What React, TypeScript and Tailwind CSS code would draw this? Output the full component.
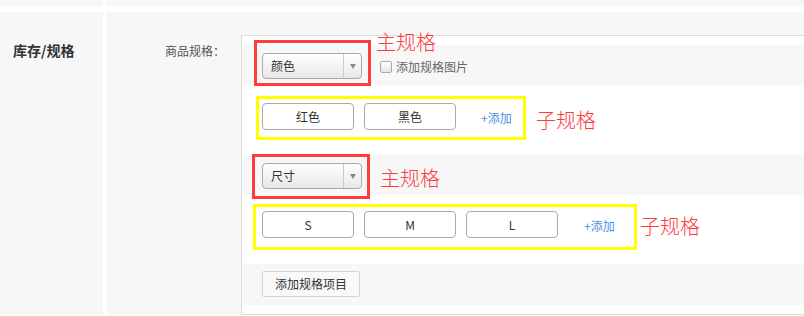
import React from 'react';

const font = { fontFamily: '"Noto Sans CJK SC", "Noto Sans", sans-serif' };

const SpecSelect: React.FC<{ value: string }> = ({ value }) => (
  <div className="flex h-[26px] w-[100px] items-center rounded-[4px] border border-[#aaa] bg-gradient-to-b from-white to-[#e8e8e8] text-[12px] text-[#333]">
    <span className="flex-1 pl-2">{value}</span>
    <span className="flex h-full w-[18px] items-center justify-center border-l border-[#ccc]">
      <span className="block h-0 w-0 border-x-[3.5px] border-t-[5px] border-x-transparent border-t-[#888]" />
    </span>
  </div>
);

const SubItem: React.FC<{ label: string }> = ({ label }) => (
  <div className="flex h-[27px] w-[92px] items-center justify-center rounded-[4px] border border-[#aaa] bg-white text-[12px] text-[#333]">
    {label}
  </div>
);

const Note: React.FC<{ text: string; className: string }> = ({ text, className }) => (
  <span className={`absolute text-[20px] font-light leading-none whitespace-nowrap text-[#ff3a3a] ${className}`}>{text}</span>
);

export default function App() {
  return (
    <div className="h-[316px] w-[804px] overflow-hidden bg-white" style={font}>
      {/* previous section edge */}
      <div className="flex h-[6px] gap-[3px]">
        <div className="w-[103px] bg-[#f7f7f7]" />
        <div className="flex-1 bg-[#f7f7f7]" />
      </div>

      <div className="mt-[6px] flex h-[303px] gap-[3px]">
        <div className="w-[103px] bg-[#f7f7f7] pl-[13px] pt-[28px] text-[14px] font-bold text-[#333]">库存/规格</div>

        <div className="flex flex-1 bg-[#f7f7f7] pt-[23px]">
          <div className="w-[135px] pt-[7px] pl-[59px] text-[12px] text-[#555]">商品规格：</div>

          <div className="flex flex-1 flex-col border-l border-t border-b border-[#ddd] bg-white pt-[9px] pb-[9px]">
            {/* main spec: 颜色 */}
            <div className="relative flex h-[40px] items-start bg-[#f7f7f7] pl-[20px] pt-[8px]">
              <SpecSelect value="颜色" />
              <label className="ml-[18px] mt-[5px] flex items-center gap-[4px] text-[12px] text-[#666]">
                <span className="block h-[12px] w-[12px] rounded-[2px] border border-[#aaa] bg-gradient-to-b from-white to-[#e6e6e6]" />
                添加规格图片
              </label>
              <div className="absolute left-[12px] top-[-5px] h-[46px] w-[117px] border-[3px] border-[#ff3b3b]" />
              <Note text="主规格" className="left-[134px] top-[-13px]" />
            </div>

            {/* sub spec */}
            <div className="relative flex h-[70px] items-start gap-[10px] pl-[20px] pt-[18px]">
              <SubItem label="红色" />
              <SubItem label="黑色" />
              <span className="ml-[15px] mt-[6px] text-[12px] text-[#4a8fe6]">+添加</span>
              <div className="absolute left-[14px] top-[11px] h-[44px] w-[270px] border-[3px] border-[#ffff00]" />
              <Note text="子规格" className="left-[294px] top-[25px]" />
            </div>

            {/* main spec: 尺寸 */}
            <div className="relative flex h-[40px] items-start bg-[#f7f7f7] pl-[20px] pt-[8px]">
              <SpecSelect value="尺寸" />
              <div className="absolute left-[10px] top-[-1px] h-[45px] w-[118px] border-[3px] border-[#ff3b3b]" />
              <Note text="主规格" className="left-[138px] top-[13px]" />
            </div>

            {/* sub spec */}
            <div className="relative flex h-[69px] items-start gap-[10px] pl-[20px] pt-[16px]">
              <SubItem label="S" />
              <SubItem label="M" />
              <SubItem label="L" />
              <span className="ml-[16px] mt-[6px] text-[12px] text-[#4a8fe6]">+添加</span>
              <div className="absolute left-[11px] top-[9px] h-[46px] w-[384px] border-[3px] border-[#ffff00]" />
              <Note text="子规格" className="left-[398px] top-[21px]" />
            </div>

            {/* add spec item */}
            <div className="flex h-[41px] items-start bg-[#f7f7f7] pl-[20px] pt-[7px]">
              <button className="h-[26px] w-[98px] rounded-[2px] border border-[#d4d4d4] bg-[#f9f9f9] text-[12px] text-[#333]">
                添加规格项目
              </button>
            </div>
          </div>
        </div>
      </div>
    </div>
  );
}
